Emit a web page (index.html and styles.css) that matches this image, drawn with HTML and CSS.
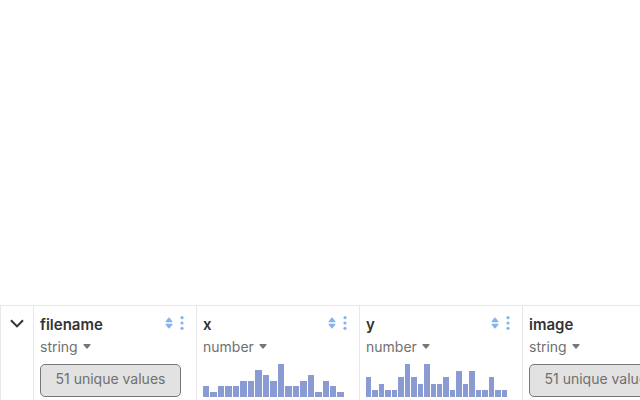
FILE: index.html
```
<!DOCTYPE html>
<html lang="en">
  <head>
    <meta charset="UTF-8" />
    <meta name="viewport" content="width=device-width, initial-scale=1.0" />
    <title>Data table</title>
    <link rel="stylesheet" href="styles.css">
  </head>
  <body>
    <main class="view"></main>

    <section class="table-panel">
      <table class="data-table">
        <thead>
          <tr id="headRow">
            <th class="toggle-cell">
              <button class="toggle" aria-label="Collapse">
                <svg width="14" height="10" viewBox="0 0 14 10">
                  <path d="M1 1.2 L7 7.4 L13 1.2" fill="none" stroke="#333" stroke-width="2" />
                </svg>
              </button>
            </th>
          </tr>
        </thead>
      </table>
    </section>

    <template id="columnTemplate">
      <th class="column">
        <div class="column-top">
          <span class="column-name"></span>
          <button class="icon-button" aria-label="Sort">
            <svg width="8" height="12" viewBox="0 0 8 12">
              <path d="M4 1.3 L6.8 4.6 H1.2 Z M4 10.7 L6.8 7.4 H1.2 Z" fill="#85b4ec" stroke="#85b4ec" stroke-width="1.4" stroke-linejoin="round" />
            </svg>
          </button>
          <button class="icon-button" aria-label="Column menu">
            <svg width="4" height="14" viewBox="0 0 4 14" fill="#85b4ec">
              <circle cx="2" cy="1.7" r="1.6" />
              <circle cx="2" cy="7" r="1.6" />
              <circle cx="2" cy="12.3" r="1.6" />
            </svg>
          </button>
        </div>
        <button class="column-type">
          <span class="type-label"></span>
          <svg width="8" height="5" viewBox="0 0 8 5">
            <path d="M1 0.7 H7 L4 4.2 Z" fill="#777" stroke="#777" stroke-width="1.2" stroke-linejoin="round" />
          </svg>
        </button>
        <div class="summary"></div>
      </th>
    </template>

    <script>
      const columns = [
        { name: "filename", type: "string", unique: 51 },
        { name: "x", type: "number", bins: [2, 1, 2, 2, 2, 3, 3, 5, 4, 3, 6, 2, 2, 3, 4, 1, 3, 2, 1] },
        { name: "y", type: "number", bins: [3, 1, 2, 1, 1, 3, 5, 3, 2, 5, 2, 2, 3, 1, 4, 2, 4, 1, 1, 3, 1, 1] },
        { name: "image", type: "string", unique: 51 },
      ];

      const headRow = document.getElementById("headRow");
      const template = document.getElementById("columnTemplate");

      columns.forEach((column) => {
        const cell = template.content.cloneNode(true);
        const summary = cell.querySelector(".summary");
        cell.querySelector(".column-name").textContent = column.name;
        cell.querySelector(".type-label").textContent = column.type;

        if (column.bins) {
          const max = Math.max(...column.bins);
          summary.classList.add("histogram");
          column.bins.forEach((count) => {
            const bar = document.createElement("span");
            bar.className = "bar";
            bar.style.height = (count / max) * 100 + "%";
            summary.appendChild(bar);
          });
        } else {
          const pill = document.createElement("button");
          pill.className = "unique-values";
          pill.textContent = column.unique + " unique values";
          summary.appendChild(pill);
        }
        headRow.appendChild(cell);
      });
    </script>
  </body>
</html>
```

FILE: styles.css
```
* {
  box-sizing: border-box;
}

body {
  margin: 0;
  height: 100vh;
  overflow: hidden;
  display: flex;
  flex-direction: column;
  background: #fff;
  color: #333;
  font-family: Inter, sans-serif;
  font-size: 14px;
}

button {
  border: none;
  background: transparent;
  padding: 0;
  margin: 0;
  font: inherit;
  color: inherit;
  cursor: pointer;
}

svg {
  display: block;
}

.view {
  flex: 1;
}

.table-panel {
  overflow: hidden;
  border-top: 1px solid #e8e8e8;
  border-left: 1px solid #e8e8e8;
}

.data-table {
  width: max-content;
  border-collapse: separate;
  border-spacing: 0;
}

.toggle-cell {
  width: 32px;
  padding: 13px 0 0;
  vertical-align: top;
}

.toggle {
  display: block;
  margin: 0 auto;
}

.column {
  width: 163px;
  padding: 7px 12px 3px 6px;
  border-left: 1px solid #e8e8e8;
  text-align: left;
  font-weight: 400;
  vertical-align: top;
}

.column-top {
  display: flex;
  align-items: center;
  gap: 7px;
  height: 22px;
}

.column-name {
  flex: 1;
  font-size: 15px;
  font-weight: 600;
}

.icon-button {
  padding-bottom: 3px;
}

.column-type {
  display: flex;
  align-items: center;
  gap: 5px;
  height: 22px;
  color: #707070;
}

.summary {
  height: 33px;
  margin: 7px 3px 0 0;
}

.histogram {
  display: flex;
  align-items: flex-end;
  gap: 1px;
}

.bar {
  flex: 1;
  background: #8a9bd4;
}

.unique-values {
  width: 100%;
  height: 33px;
  padding-bottom: 4px;
  border: 1px solid #777;
  border-radius: 5px;
  background: #e2e2e2;
  color: #707070;
}
```
